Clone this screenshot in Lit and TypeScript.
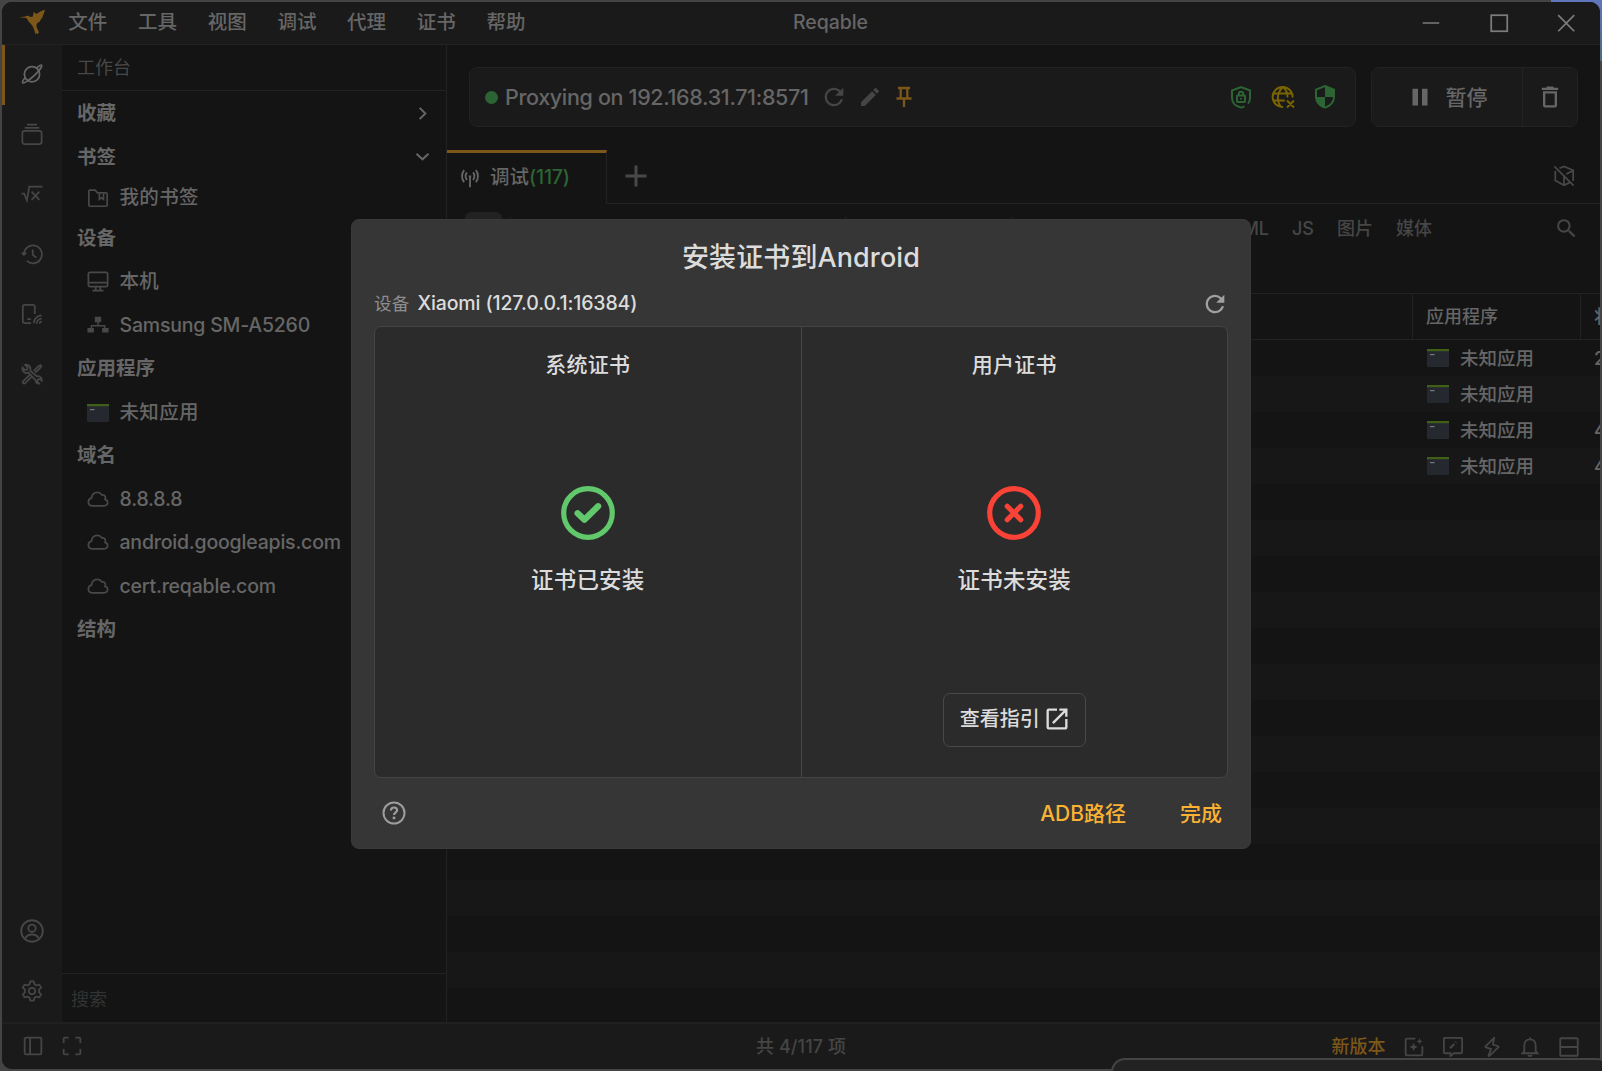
import { LitElement, html, svg, css, nothing } from "lit";
import { customElement } from "lit/decorators.js";
import { classMap } from "lit/directives/class-map.js";

const fill = (d: string) => svg`<path fill="currentColor" stroke="none" d=${d}></path>`;
const line = (d: string) => svg`<path d=${d}></path>`;

const icons: Record<string, unknown> = {
  planet: svg`<circle cx="12" cy="12.2" r="8.300"/>${line("M17 5.300C20 2.800 21.800 1.700 22.400 2.300c1 1-2.500 6-7.200 10.700S2.900 22.700 1.900 21.700c-.7-.7.6-3.300 3-6.200")}`,
  stack: svg`<rect x="1.500" y="8.500" width="21" height="14.500" rx="2.500"/>${line("M4 5.200h16M6.500 1.700h11")}`,
  sqrt: line("M.5 11.500h2.900L6.400 19 9 4h14.500M11.500 9.500l8.500 9M20 9.500l-8.500 9"),
  history: line("M3.200 12.600A9.800 9.800 0 1 1 6.400 19.600M.9 10.500l2.300 2.300 2.500-2.300M12.800 7.200v5.600l4 3.200"),
  device: line("M11 22H3.800A1.800 1.800 0 0 1 2 20.200V3.800A1.800 1.800 0 0 1 3.800 2h9.400A1.800 1.800 0 0 1 15 3.800V12M6.800 17.500h4M14 22a8.500 8.500 0 0 1 8.500-8.500M17 22.500a5.500 5.500 0 0 1 5.500-5.500M20.300 22.700a2.300 2.300 0 0 1 2.300-2.300"),
  tools: line("M10 8.500c.8-2.600-.2-5.200-2.700-6.300-1-.4-2-.5-2.900-.2l2.900 2.900-.6 2.300-2.300.6L1.700 5c-.4 1.200-.1 2.700.7 3.900 1.300 1.900 3.700 2.400 5.700 1.600l8 8.600c-.2 2 1.400 3.600 3.600 3.300l-2-2.300.7-2.200 2.200-.6 2 2c.3-2-.5-3.800-2.200-4.600-1-.5-2.100-.5-3.200-.2L10 8.500zM14 8.800l4.500-4.800 2.700-1.700 1 1-1.700 2.700-4.800 4.600M9.300 13.300l-6.800 6.500c-.7.7-.7 1.600-.1 2.200s1.500.5 2.200-.1l6.600-6.600"),
  user: svg`<circle cx="12" cy="12" r="10.800"/><circle cx="12" cy="9.300" r="3.700"/>${line("M5 19.800c1.300-2.900 3.800-4.300 7-4.300s5.700 1.400 7 4.300")}`,
  gear: svg`<circle cx="12" cy="12" r="3.500"/>${line("M10.200 1.500h3.600l1 3.200 2.100 1.200 3.200-.8 1.900 3.200-2.300 2.300v2.800l2.300 2.300-1.900 3.200-3.200-.8-2.100 1.200-1 3.200h-3.600l-1-3.200-2.100-1.200-3.200.8-1.900-3.200 2.300-2.300v-2.800L2 8.300l1.900-3.200 3.200.8 2.100-1.200z")}`,
  chevronRight: line("M8 4l8 8-8 8"),
  chevronDown: line("M3.500 8l8.500 8 8.500-8"),
  folder: svg`${line("M2 20V4.500c0-.6.4-1 1-1h6l2.500 3H21c.6 0 1 .4 1 1V20c0 .6-.4 1-1 1H3c-.6 0-1-.4-1-1z")}${line("M13.500 7v6.500l2.200-1.600 2.300 1.600V7")}`,
  monitor: svg`<rect x="1.500" y="1.500" width="21" height="15.500" rx="1.800"/>${line("M1.500 12.800h21M9.500 17v4M14.500 17v4M6 21.500h12")}`,
  network: fill("M8.500 2h7v6h-2.700v3H20v3.200h3.500V19h-7v-4.800h2v-1.700h-13v1.700h2V19h-7v-4.800H4V11h7.200V8H8.500z"),
  cloud: svg`<g transform="translate(0 -2)">${line("M6.200 20.300c-2.700 0-4.700-1.700-4.700-4.200 0-2.200 1.300-3.600 3.300-4.100.6-3.800 3-6.300 6.400-6.300 2.300 0 4 1 5.200 2.800 1.700-.4 3.200.3 3.600 2.200.2 1 .1 1.800-.3 2.600 1.800.4 2.800 1.500 2.800 3.200 0 2.300-1.700 3.800-4 3.800z")}</g>`,
  refresh: fill("M17.650 6.350A7.958 7.958 0 0 0 12 4c-4.420 0-7.990 3.580-7.990 8s3.570 8 7.990 8c3.730 0 6.840-2.550 7.730-6h-2.080A5.990 5.990 0 0 1 12 18c-3.310 0-6-2.690-6-6s2.690-6 6-6c1.660 0 3.140.69 4.220 1.780L13 11h7V4l-2.350 2.350z"),
  edit: fill("M3 17.250V21h3.750L17.810 9.940l-3.750-3.750L3 17.250zM20.710 7.040a.996.996 0 0 0 0-1.410l-2.340-2.340a.996.996 0 0 0-1.410 0l-1.830 1.830 3.750 3.750 1.830-1.830z"),
  pin: line("M6 3h12M8.700 3v10M15.300 3v10M4.500 13.500h15M12 13.500V22"),
  shieldLock: svg`${line("M15.500 21.300c-1.100.7-2.300 1-3.500 1.200-5-1-9-4.400-9-9.500V5.500L12 2l9 3.500V13c0 2.200-.7 4-2 5.600")}<rect x="8" y="10.500" width="8" height="6.500" rx=".8"/>${line("M9.800 10.500V9a2.200 2.200 0 0 1 4.400 0v1.500M12 13v1.500")}`,
  globeOff: line("M12 22A10 10 0 1 1 21.600 12.500M12 2C5.500 8 5.500 16 10 22M12 2c3.500 3.200 4.800 6.800 4.500 10.500M2.800 8.500h18.400M2.800 15.500h11M16 15.500l7 7M23 15.500l-7 7"),
  shieldHalf: svg`${line("M12 1l9 3.600V12c0 5-3.800 9.300-9 10.600C6.800 21.300 3 17 3 12V4.600z")}${fill("M12 1l9.500 3.500V12H12zM12 12v11C6.500 21.700 2.600 17 2.500 12z")}`,
  pause: fill("M4.500 3.700h5.500v16.800H4.500zM14 3.700h5.500v16.800H14z"),
  trash: fill("M6 19c0 1.100.9 2 2 2h8c1.100 0 2-.9 2-2V7H6v12zM8 9h8v10H8V9zm7.500-5l-1-1h-5l-1 1H5v2h14V4h-3.500z"),
  antenna: line("M12 10v13M5 2.500C1.600 6.500 1.600 13 5 17M19 2.500c3.400 4 3.400 10.500 0 14.500M8.300 5.300c-2 2.700-2 6.200 0 9M15.700 5.300c2 2.700 2 6.200 0 9M10.500 10h3"),
  plus: line("M12 1.500v21M1.500 12h21"),
  boxOff: line("M1.500 1.500l21 21M2.500 6.500V17l9.500 5 6-2.800M7 3.500L12 1.500l10 4.300V17.500M12 11v11M14.500 9.800l7-3.500"),
  search: fill("M15.500 14h-.79l-.28-.27A6.471 6.471 0 0 0 16 9.500 6.500 6.500 0 1 0 9.500 16c1.610 0 3.090-.59 4.230-1.570l.27.28v.79l5 4.990L20.490 19l-4.990-5zm-6 0C7.010 14 5 11.990 5 9.500S7.010 5 9.500 5 14 7.010 14 9.500 11.990 14 9.500 14z"),
  panelLeft: svg`<rect x="2" y="2" width="20" height="20" rx="1.500"/>${line("M8.500 2v20")}`,
  expand: line("M2 8.500V3.500A1.500 1.500 0 0 1 3.500 2H8M16 2h4.500A1.500 1.500 0 0 1 22 3.500v5M22 15.500v5a1.500 1.500 0 0 1-1.500 1.500H16M8 22H3.500A1.500 1.500 0 0 1 2 20.500v-5"),
  sparkle: svg`${line("M13.500 2H3.500A1.500 1.500 0 0 0 2 3.500v17A1.500 1.500 0 0 0 3.500 22h17a1.500 1.500 0 0 0 1.500-1.500V11")}${fill("M11.500 7l1.400 3.600 3.600 1.400-3.600 1.400-1.400 3.600-1.400-3.600L6.500 12l3.600-1.400zM18.700 1.300l1.100 2.800 2.800 1.100-2.800 1.100-1.100 2.800-1.100-2.800-2.800-1.100 2.800-1.100z")}`,
  feedback: svg`${line("M7.500 19.500H2.500A1.500 1.500 0 0 1 1 18V2.500A1.500 1.500 0 0 1 2.500 1h19A1.500 1.500 0 0 1 23 2.500V18a1.500 1.500 0 0 1-1.500 1.500H13l-4 3.500v-3.500z")}<path stroke-width="2.600" d="M8.500 13.500l5-5M15 7l.8-.8"/>`,
  bolt: line("M14.500 1L4.500 11c-.6.600-.4 1.300.4 1.500l6 2-3 7.500c-.3.900.4 1.200 1 .6L19.500 12.500c.6-.6.400-1.300-.4-1.500l-6-2z"),
  bell: svg`${line("M12 2.800c-4 0-6.800 2.900-6.800 6.800V17l-2.200 2.500h18L18.800 17V9.600c0-3.900-2.800-6.800-6.800-6.800zM12 .5v2.300")}${fill("M9 21.500h6a3 2.500 0 0 1-6 0z")}`,
  panelBottom: svg`<rect x="1.500" y="1.500" width="21" height="21" rx="1"/>${line("M1.500 12h21")}`,
  help: svg`<circle cx="12" cy="12" r="10.500"/><path stroke-width="2.200" d="M8.900 9.500c.1-1.900 1.400-3 3.100-3 1.800 0 3.100 1.100 3.100 2.800 0 2.200-3.100 2.300-3.100 4.700"/>${fill("M10.700 15.700h2.600v2.500h-2.600z")}`,
  external: fill("M19 19H5V5h7V3H5a2 2 0 0 0-2 2v14a2 2 0 0 0 2 2h14c1.100 0 2-.9 2-2v-7h-2v7zM14 3v2h3.590l-9.830 9.830 1.410 1.410L19 6.410V10h2V3h-7z"),
  ok: svg`<circle cx="12" cy="12" r="10.800"/><path stroke-width="2.800" d="M7.400 12.100l3 2.900 6.100-6"/>`,
  fail: svg`<circle cx="12" cy="12" r="10.800"/><path stroke-width="2.300" d="M9 9l6 6M15 9l-6 6"/>`,
  minimize: line("M3 12h18"),
  maximize: svg`<rect x="3.500" y="3.500" width="17.500" height="17.500"/>`,
  close: line("M3.500 3.500l17.500 17.500M21 3.500L3.500 21"),
  bird: fill("M0 7.500l5.800-.5C7.200 5.900 9 6.100 10.300 7.400L12.800 7c.2-1.800.5-3 1-4.200l2.300 1.800C18.500 3 21 1.800 23.900.8c-.3 2-.9 3.500-1.700 5l-.6 2-1.500 1.800-1 1.900-2.300 1.700c-.7 1-.8 2-.6 3.200l2.500 6-1.300-.6.100 1.800-1.500-1.500-.8 1.500c-.5-3-1.400-5.800-3-8.400C10.300 12.500 8.500 11.800 7.800 9.600 7.300 8.300 6.200 7.900 5.300 8z"),
};

const icon = (name: string, size = "m", tone = "") =>
  html`<svg class="icon ${size} ${tone}" viewBox="0 0 24 24">${icons[name]}</svg>`;

const terminal = html`<svg class="terminal" viewBox="0 0 22 18">
  <rect width="22" height="18" rx="1" fill="#262830"></rect>
  <rect width="22" height="2.200" fill="#3f5f16"></rect>
  <rect x="3" y="5" width="4.500" height="1.200" fill="#77797e"></rect>
</svg>`;

interface TreeRow { label: string; icon?: string; latin?: boolean; chevron?: string; gap?: string }

const menu = ["文件", "工具", "视图", "调试", "代理", "证书", "帮助"];
const rail = ["planet", "stack", "sqrt", "history", "device", "tools"];
const tree: TreeRow[] = [
  { label: "收藏", chevron: "chevronRight", gap: "first" },
  { label: "书签", chevron: "chevronDown" },
  { label: "我的书签", icon: "folder", gap: "tight" },
  { label: "设备", gap: "tight" },
  { label: "本机", icon: "monitor" },
  { label: "Samsung SM-A5260", icon: "network", latin: true },
  { label: "应用程序" },
  { label: "未知应用", icon: "terminal" },
  { label: "域名" },
  { label: "8.8.8.8", icon: "cloud", latin: true },
  { label: "android.googleapis.com", icon: "cloud", latin: true },
  { label: "cert.reqable.com", icon: "cloud", latin: true },
  { label: "结构" },
];
const records = ["200", "", "404", "404"];

@customElement("app-root")
export class AppRoot extends LitElement {
  static styles = css`
    :host { display: block; width: 1602px; height: 1071px; overflow: hidden; position: relative;
      background: #444; color: #666; font-family: Inter, "Noto Sans CJK SC", sans-serif; font-size: 19.5px; font-weight: 500; line-height: 1; white-space: nowrap; }
    * { box-sizing: border-box; }
    .icon { fill: none; stroke: currentColor; stroke-width: 1.9; flex: none; display: block; }
    .xs { width: 17px; height: 17px; stroke-width: 2.8; position: relative; top: -1px; }
    .s { width: 20px; height: 20px; stroke-width: 2.2; }
    .m { width: 22px; height: 22px; }
    .l { width: 24px; height: 24px; }
    .g { width: 28px; height: 28px; }
    .xl { width: 54px; height: 54px; stroke-width: 2.3; stroke-linecap: round; stroke-linejoin: round; }
    .logo { width: 26px; height: 26px; }
    .bold { stroke-width: 2.3; }
    .plus { stroke-width: 3; }
    .amber { color: #7d5719; }
    .yellow { color: #7b6500; stroke-width: 1.9; }
    .green { color: #2c6433; stroke-width: 2; }
    .desktop-edge { position: absolute; right: 0; top: 0; width: 51px; height: 61px; background: linear-gradient(#6077bd, #4d6b7b); }
    .window { position: absolute; inset: 2px; border-radius: 10px; overflow: hidden; background: #141414; display: flex; flex-direction: column; }
    .titlebar { height: 43px; flex: none; background: #1a1a1a; border-bottom: 1px solid #222; display: grid; grid-template-columns: 1fr auto 1fr; align-items: center; }
    .menus { display: flex; align-items: center; padding-left: 17px; }
    .menus .entries { display: flex; padding-left: 8px; }
    .menus .entry { width: 69.700px; text-align: center; }
    .menus .logo { margin-bottom: 2px; }
    .app-name { padding-left: 59px; letter-spacing: -.05px; }
    .controls { display: flex; justify-content: flex-end; color: #7c7c7c; }
    .controls .slot { width: 67.500px; display: flex; justify-content: center; }
    .body { flex: 1; display: flex; min-height: 0; }
    .rail { width: 60px; background: #1a1a1a; display: flex; flex-direction: column; color: #464646; }
    .rail .slot { height: 60px; border-left: 3px solid transparent; padding: 0 3px 2px 0; display: flex; align-items: center; justify-content: center; }
    .rail .active { border-left-color: #7d5719; color: #666; }
    .rail .spacer { flex: 1; }
    .sidebar { width: 385px; border-right: 1px solid #222; display: flex; flex-direction: column; }
    .side-title { height: 46px; border-bottom: 1px solid #222; padding: 0 15px; display: flex; align-items: center; font-size: 18px; font-weight: 400; color: #484848; }
    .tree { flex: 1; }
    .row { height: 40px; margin-top: 3.500px; padding: 0 15px; display: flex; align-items: center; justify-content: space-between; font-weight: 700; }
    .row.child { padding-left: 25px; justify-content: flex-start; gap: 10.500px; font-weight: 500; }
    .row.child .icon { color: #484848; }
    .row.child .cjk { letter-spacing: .35px; }
    .row.child .latin { letter-spacing: -.2px; }
    .row.first { margin-top: 3px; }
    .row.tight { margin-top: .500px; }
    .terminal { width: 22px; height: 18px; flex: none; display: block; }
    .side-search { height: 49px; border-top: 1px solid #222; padding: 4px 9px 0; display: flex; align-items: center; font-size: 18px; font-weight: 400; color: #333; }
    .main { flex: 1; min-width: 0; display: flex; flex-direction: column; }
    .toolbar { height: 105px; padding: 22px 22px 0; display: flex; gap: 15px; }
    .box { height: 60px; border: 1px solid #222; border-radius: 8px; background: #1a1a1a; display: flex; align-items: center; }
    .proxy { flex: 1; padding: 0 18px 0 15px; font-size: 21.500px; }
    .dot { width: 13px; height: 13px; border-radius: 50%; background: #2c6433; margin-right: 7px; }
    .address { letter-spacing: -.34px; padding-top: 1.500px; }
    .proxy .tools { display: flex; align-items: center; gap: 10px; margin-left: 11px; color: #454545; }
    .proxy .badges { display: flex; gap: 18px; margin-left: auto; }
    .run { width: 207px; font-size: 21px; }
    .run .pause { flex: 1; display: flex; align-items: center; justify-content: center; gap: 14px; height: 100%; border-right: 1px solid #222; padding-left: 1px; }
    .run .clear { width: 54px; display: flex; justify-content: center; }
    .tabs { height: 54px; display: flex; }
    .tab { width: 160px; border-top: 3px solid #7d5719; border-right: 1px solid #222; display: flex; align-items: center; padding: 0 0 2px 13px; }
    .tab .label { padding-left: 10px; }
    .tab .count { color: #2c6433; letter-spacing: -.2px; }
    .tab-rest { flex: 1; border-bottom: 1px solid #222; display: flex; align-items: center; justify-content: space-between; padding: 0 25px 1px 17px; color: #484848; }
    .filters { height: 89px; flex: none; display: flex; align-items: flex-start; color: #464646; font-size: 18px; padding: 8px 21px 0 18px; }
    .chip { width: 37px; height: 34px; border-radius: 6px; background: #222; }
    .tick { width: 1px; height: 24px; background: #222; margin-top: 5px; }
    .tick.a { margin-left: 8px; } .tick.b { margin-left: 334px; } .tick.c { margin-left: 166px; }
    .filters .names { display: flex; gap: 23px; margin-left: auto; padding-top: 8px; }
    .filters .find { padding: 4px 0 0 122px; }
    .filters .icon { width: 25px; height: 25px; }
    .thead { height: 47px; flex: none; border-top: 1px solid #222; border-bottom: 1px solid #222; display: flex; font-size: 18px; }
    .thead .col { display: flex; align-items: center; padding-left: 13px; border-left: 1px solid #222; }
    .col.app { width: 168px; } .col.state { width: 20px; }
    .thead .fill { flex: 1; }
    .records { flex: 1; min-height: 0; overflow: hidden; background: repeating-linear-gradient(#141414 0 36px, #171717 36px 72px); }
    .record { height: 36px; display: flex; justify-content: flex-end; font-size: 18.500px; }
    .record .col { display: flex; align-items: center; gap: 11px; padding-left: 15px; }
    .record .state { padding-left: 14px; }
    .statusbar { height: 47px; flex: none; background: #1a1a1a; border-top: 2px solid #202020; display: grid; grid-template-columns: 1fr auto 1fr; align-items: center; padding: 0 21px; color: #454545; font-size: 18px; }
    .statusbar .left { display: flex; gap: 19px; padding-bottom: 1px; }
    .statusbar .right { display: flex; justify-content: flex-end; align-items: center; gap: 18.700px; }
    .statusbar .new { color: #7d5719; }
    .total { letter-spacing: .1px; }
    .neighbour { position: absolute; left: 1111px; top: 1058px; width: 500px; height: 30px; border: 2px solid #444; border-radius: 14px; background: #222; }
    .dialog { position: absolute; left: 351px; top: 219px; width: 900px; height: 630px; border-radius: 8px; background: #363636; border: 1px solid #3a3a3a; color: #dcdcdc; padding: 0 22px; display: flex; flex-direction: column; }
    .dialog-title { height: 64px; display: flex; align-items: center; justify-content: center; font-size: 27px; letter-spacing: .1px; padding-top: 11px; }
    .device { height: 42px; display: flex; align-items: center; padding-bottom: 3px; }
    .device .key { font-size: 17.500px; font-weight: 400; color: #8e8e8e; margin-right: 8px; letter-spacing: .2px; }
    .device .value { font-size: 19.500px; flex: 1; letter-spacing: -.12px; }
    .device .icon { color: #a0a0a0; margin-right: -1px; }
    .panels { height: 452px; border: 1px solid #444; border-radius: 7px; background: #2b2b2b; display: flex; }
    .panel { flex: 1; display: flex; flex-direction: column; align-items: center; }
    .panel + .panel { border-left: 1px solid #484848; }
    .panel-title { font-size: 21px; padding-top: 27px; height: 159px; letter-spacing: .2px; }
    .panel-state { font-size: 22.500px; padding-top: 29px; letter-spacing: .2px; }
    .ok { color: #61c96c; } .fail { color: #fa4336; }
    .guide { margin-top: 101px; width: 143px; height: 54px; border: 1px solid #484848; border-radius: 7px; font-size: 20px; display: flex; align-items: center; justify-content: center; gap: 3px; padding-bottom: 1px; }
    .guide .icon { margin: 0 -2px 0 0; }
    .actions { flex: 1; display: flex; align-items: center; padding: 0 6px 0 8px; color: #f9b233; font-size: 21px; }
    .actions .icon { color: #9d9d9d; margin-right: auto; stroke-width: 2; }
    .actions .adb { margin-right: 54px; }
  `;

  private row(r: TreeRow) {
    const classes = { row: true, child: !!r.icon, first: r.gap === "first", tight: r.gap === "tight" };
    return html`<div class=${classMap(classes)}>
      ${r.icon ? (r.icon === "terminal" ? terminal : icon(r.icon, "m")) : nothing}
      <span class=${r.latin ? "latin" : "cjk"}>${r.label}</span>
      ${r.chevron ? icon(r.chevron, "xs") : nothing}
    </div>`;
  }

  render() {
    return html`
      <div class="desktop-edge"></div>
      <div class="window">
        <header class="titlebar">
          <div class="menus">
            ${icon("bird", "logo", "amber")}
            <div class="entries">${menu.map((m) => html`<span class="entry">${m}</span>`)}</div>
          </div>
          <span class="app-name">Reqable</span>
          <div class="controls">
            ${["minimize", "maximize", "close"].map((n) => html`<span class="slot">${icon(n, "m")}</span>`)}
          </div>
        </header>
        <div class="body">
          <nav class="rail">
            ${rail.map((n, i) => html`<div class=${classMap({ slot: true, active: i === 0 })}>${icon(n, "m")}</div>`)}
            <div class="spacer"></div>
            <div class="slot">${icon("user", "l")}</div>
            <div class="slot">${icon("gear", "m")}</div>
          </nav>
          <aside class="sidebar">
            <div class="side-title">工作台</div>
            <div class="tree">${tree.map((r) => this.row(r))}</div>
            <div class="side-search">搜索</div>
          </aside>
          <main class="main">
            <div class="toolbar">
              <div class="box proxy">
                <span class="dot"></span>
                <span class="address">Proxying on 192.168.31.71:8571</span>
                <div class="tools">${icon("refresh", "g")}${icon("edit", "l")}${icon("pin", "l", "amber bold")}</div>
                <div class="badges">
                  ${icon("shieldLock", "l", "green")}${icon("globeOff", "l", "yellow")}${icon("shieldHalf", "l", "green")}
                </div>
              </div>
              <div class="box run">
                <div class="pause">${icon("pause", "l")}<span>暂停</span></div>
                <div class="clear">${icon("trash", "g")}</div>
              </div>
            </div>
            <div class="tabs">
              <div class="tab">${icon("antenna", "s")}<span class="label">调试</span><span class="count">(117)</span></div>
              <div class="tab-rest">${icon("plus", "l", "plus")}${icon("boxOff", "m")}</div>
            </div>
            <div class="filters">
              <span class="chip"></span><span class="tick a"></span><span class="tick b"></span><span class="tick c"></span>
              <div class="names"><span>HTML</span><span>JS</span><span>图片</span><span>媒体</span></div>
              <div class="find">${icon("search", "l")}</div>
            </div>
            <div class="thead">
              <span class="fill"></span><span class="col app">应用程序</span><span class="col state">状态</span>
            </div>
            <div class="records">
              ${records.map((s) => html`<div class="record">
                <span class="col app">${terminal}<span>未知应用</span></span><span class="col state">${s}</span>
              </div>`)}
            </div>
          </main>
        </div>
        <footer class="statusbar">
          <div class="left">${icon("panelLeft", "s")}${icon("expand", "s")}</div>
          <span class="total">共 4/117 项</span>
          <div class="right">
            <span class="new">新版本</span>
            ${["sparkle", "feedback", "bolt", "bell", "panelBottom"].map((n) => icon(n, "s"))}
          </div>
        </footer>
      </div>
      <div class="neighbour"></div>
      <section class="dialog">
        <div class="dialog-title"><span>安装证书到</span><span>Android</span></div>
        <div class="device"><span class="key">设备</span><span class="value">Xiaomi (127.0.0.1:16384)</span>${icon("refresh", "g")}</div>
        <div class="panels">
          <div class="panel">
            <div class="panel-title">系统证书</div>${icon("ok", "xl", "ok")}
            <div class="panel-state">证书已安装</div>
          </div>
          <div class="panel">
            <div class="panel-title">用户证书</div>${icon("fail", "xl", "fail")}
            <div class="panel-state">证书未安装</div>
            <div class="guide"><span>查看指引</span>${icon("external", "g")}</div>
          </div>
        </div>
        <div class="actions">${icon("help", "l")}<span class="adb">ADB路径</span><span class="done">完成</span></div>
      </section>
    `;
  }
}
